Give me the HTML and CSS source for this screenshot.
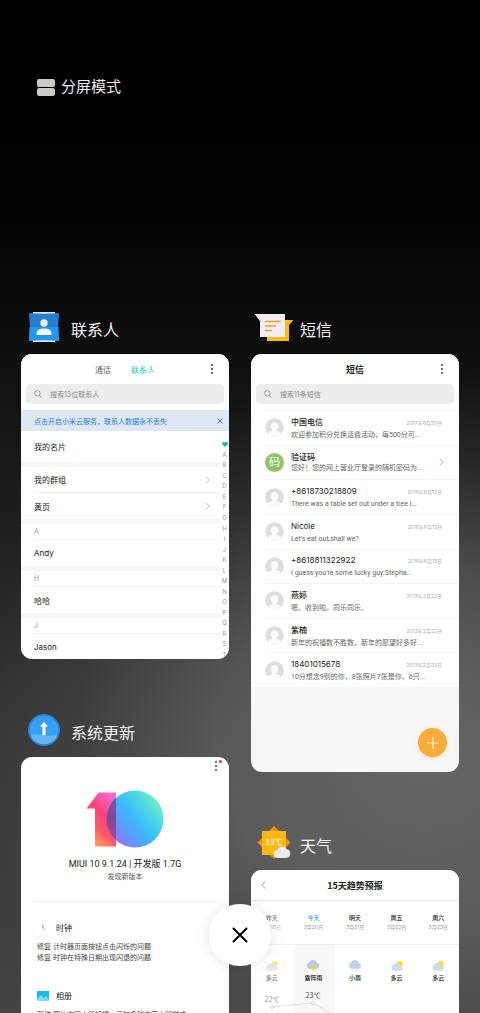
FILE: index.html
```html
<!DOCTYPE html>
<html lang="zh-CN">
<head>
<meta charset="utf-8">
<meta name="viewport" content="width=device-width, initial-scale=1">
<title>最近任务</title>
<link rel="stylesheet" href="styles.css">
</head>
<body>
<main class="recents">
  <button class="split" type="button">
    <span class="split-icon"><i></i><i></i></span>
    <span>分屏模式</span>
  </button>

  <div class="columns">
    <div class="column">
      <section class="task">
        <header class="task-head">
          <svg class="task-icon" viewBox="0 0 32 32" width="32" height="32" aria-hidden="true">
            <path d="M5 1h22v30H5z" fill="#e4e8e8"/>
            <path d="M1 2q15 1.600 30 0L30 17H2z" fill="#267fcc"/>
            <path d="M1.500 16h29l.5 14q-15-1.600-30 0z" fill="#1e97f5"/>
            <circle cx="16" cy="12" r="3.700" fill="#e8edf2"/>
            <path d="M8.500 24v-1.500c0-3.500 3-5 7.500-5s7.500 1.500 7.500 5V24z" fill="#f4f7fa"/>
          </svg>
          <h2>联系人</h2>
        </header>
        <article class="card contacts">
          <nav class="app-bar">
            <a class="tab" href="#calls">通话</a>
            <a class="tab active" href="#contacts">联系人</a>
            <button class="more" type="button" aria-label="更多"><i></i><i></i><i></i></button>
          </nav>
          <label class="search">
            <svg viewBox="0 0 10 10" width="8" height="8" aria-hidden="true"><circle cx="4.200" cy="4.200" r="3.400"/><path d="M6.800 6.800 9.500 9.500"/></svg>
            <input type="text" placeholder="搜索13位联系人" aria-label="搜索联系人">
          </label>
          <div class="banner">
            <a href="#cloud">点击开启小米云服务，联系人数据永不丢失</a>
            <button type="button" aria-label="关闭提示"><svg viewBox="0 0 6 6" width="6" height="6"><path d="M.5.5l5 5m0-5l-5 5"/></svg></button>
          </div>
          <div class="contact-body">
            <div class="contact-list">
              <a class="row tall" href="#me">我的名片</a>
              <div class="band"></div>
              <a class="row line" href="#groups">我的群组<svg class="chev" viewBox="0 0 5 8" width="5" height="8"><path d="M.7.7 4.200 4 .7 7.300"/></svg></a>
              <a class="row" href="#yellow">黄页<svg class="chev" viewBox="0 0 5 8" width="5" height="8"><path d="M.7.7 4.200 4 .7 7.300"/></svg></a>
              <div class="band"></div>
              <h3 class="letter">A</h3>
              <a class="row" href="#andy">Andy</a>
              <div class="band"></div>
              <h3 class="letter">H</h3>
              <a class="row" href="#haha">哈哈</a>
              <div class="band"></div>
              <h3 class="letter">J</h3>
              <a class="row" href="#jason">Jason</a>
            </div>
            <div class="index">
              <span><svg viewBox="0 0 6 5" width="6" height="5"><path d="M3 5 .4 2.600C-.5 1.200.5 0 1.600 0 2.300 0 2.800.4 3 .8 3.200.4 3.700 0 4.400 0 5.500 0 6.500 1.200 5.600 2.600z" fill="#15b8ac"/></svg></span>
              <span>A</span><span>B</span><span>C</span><span>D</span><span>E</span><span>F</span><span>G</span><span>H</span><span>I</span><span>J</span><span>K</span><span>L</span><span>M</span><span>N</span><span>O</span><span>P</span><span>Q</span><span>R</span><span>S</span><span>T</span>
            </div>
          </div>
        </article>
      </section>

      <section class="task">
        <header class="task-head">
          <svg class="task-icon" viewBox="0 0 32 32" width="32" height="32" aria-hidden="true">
            <circle cx="16" cy="16" r="16" fill="#2784d8"/>
            <circle cx="16" cy="16" r="14.300" fill="#379ff2"/>
            <path d="M2.600 21q6.700-1.400 13.400 0t13.400 0A14.300 14.300 0 0 1 2.600 21z" fill="#64b5f5"/>
            <path d="M16 8l4 4.500h-2.500V21h-3v-8.500H12z" fill="#fff"/>
          </svg>
          <h2>系统更新</h2>
        </header>
        <article class="card update">
          <div class="update-top">
            <button class="more dot" type="button" aria-label="更多"><i></i><i></i><i></i></button>
          </div>
          <svg class="logo" viewBox="0 0 78 58" width="78" height="58" role="img" aria-label="10">
            <defs>
              <linearGradient id="one" x1="0.300" y1="1" x2="0.800" y2="0">
                <stop offset="0" stop-color="#ffa657"/><stop offset=".3" stop-color="#ff5a68"/><stop offset=".6" stop-color="#ff3f7a"/><stop offset="1" stop-color="#f66fd6"/>
              </linearGradient>
              <linearGradient id="zero" x1="0.100" y1="0.850" x2="0.900" y2="0.200">
                <stop offset="0" stop-color="#a06cf8"/><stop offset=".2" stop-color="#6b90fb"/><stop offset=".5" stop-color="#3cb9fb"/><stop offset=".75" stop-color="#4bd2e8"/><stop offset="1" stop-color="#6cf0c4"/>
              </linearGradient>
              <linearGradient id="over" x1="0" y1="0" x2="0" y2="1">
                <stop offset="0" stop-color="#6a5cc4"/><stop offset=".5" stop-color="#84488f"/><stop offset="1" stop-color="#a04db0"/>
              </linearGradient>
              <clipPath id="disc"><circle cx="49" cy="29" r="28.500"/></clipPath>
            </defs>
            <path d="M12.500 2.500H30V56.500H9V18.500H.5z" fill="url(#one)"/>
            <circle cx="49" cy="29" r="28.500" fill="url(#zero)"/>
            <path d="M20 2.500h10v54H20z" fill="url(#over)" clip-path="url(#disc)"/>
          </svg>
          <p class="version">MIUI 10 9.1.24 | 开发版 1.7G</p>
          <p class="found">发现新版本</p>
          <div class="change first">
            <h3><svg viewBox="0 0 12 12" width="12" height="12" aria-hidden="true"><path d="M5.500 2.500 6.300 6" stroke="#8d939c" fill="none"/><path d="M6.300 6l2.200 3" stroke="#f4a0a8" fill="none"/></svg>时钟</h3>
            <p>修复 计时器页面按钮点击闪烁的问题</p>
            <p>修复 时钟在特殊日期出现闪退的问题</p>
          </div>
          <div class="change">
            <h3><svg viewBox="0 0 12 12" width="12" height="12" aria-hidden="true"><path d="M0 1h12v10H0z" fill="#13bdf0"/><path d="M0 9l4-4 3 3 2-2 3 3v2H0z" fill="#7fdcf6"/></svg>相册</h3>
            <p>新增 照片文字水印编辑，添加多种文艺水印样式</p>
          </div>
        </article>
      </section>
    </div>

    <div class="column">
      <section class="task">
        <header class="task-head wide">
          <svg class="task-icon" viewBox="0 0 40 32" width="40" height="32" aria-hidden="true">
            <path d="M13 9h26.500L35 14v16H13z" fill="#fdbe0f"/>
            <path d="M.5 3H31v23H6V10z" fill="#f0eef2"/>
            <path d="M11 10.500h15.500M11 15h11M11 19.500h7" stroke="#f79a2d" stroke-width="1.500"/>
          </svg>
          <h2>短信</h2>
        </header>
        <article class="card sms">
          <header class="app-bar">
            <h3 class="title">短信</h3>
            <button class="more" type="button" aria-label="更多"><i></i><i></i><i></i></button>
          </header>
          <div class="search-area">
            <label class="search">
              <svg viewBox="0 0 10 10" width="8" height="8" aria-hidden="true"><circle cx="4.200" cy="4.200" r="3.400"/><path d="M6.800 6.800 9.500 9.500"/></svg>
              <input type="text" placeholder="搜索11条短信" aria-label="搜索短信">
            </label>
          </div>
          <svg class="defs" width="0" height="0" aria-hidden="true"><defs>
            <clipPath id="round"><circle cx="10" cy="10" r="10"/></clipPath>
            <symbol id="person" viewBox="0 0 20 20"><circle cx="10" cy="10" r="10" fill="#dcdee1"/><path clip-path="url(#round)" d="M10 4.200c2.600 0 4 1.900 4 4.300 0 1.700-.6 3.100-1.600 4v1.300c1.500.8 4 1 5 3V21H2.600v-4.200c1-2 3.500-2.200 5-3v-1.300c-1-.9-1.600-2.300-1.600-4 0-2.400 1.400-4.300 4-4.300z" fill="#fafafb"/></symbol>
          </defs></svg>
          <ul class="messages">
            <li><svg class="avatar"><use href="#person"/></svg><div class="msg"><h4>中国电信</h4><time>2017年6月30日</time><p>欢迎参加积分兑换话费活动，每500分可...</p></div></li>
            <li><span class="avatar code">码</span><div class="msg"><h4>验证码</h4><p>您好！您的网上营业厅登录的随机密码为...</p></div><svg class="chev" viewBox="0 0 5 8" width="5" height="8"><path d="M.7.7 4.200 4 .7 7.300"/></svg></li>
            <li><svg class="avatar"><use href="#person"/></svg><div class="msg"><h4 class="latin">+8618730218809</h4><time>2016年6月13日</time><p>There was a table set out under a tree i...</p></div></li>
            <li><svg class="avatar"><use href="#person"/></svg><div class="msg"><h4 class="latin">Nicole</h4><time>2016年6月13日</time><p>Let's eat out,shall we?</p></div></li>
            <li><svg class="avatar"><use href="#person"/></svg><div class="msg"><h4 class="latin">+8618811322922</h4><time>2016年6月13日</time><p>I guess you're some lucky guy.Stepha...</p></div></li>
            <li><svg class="avatar"><use href="#person"/></svg><div class="msg"><h4>燕婷</h4><time>2013年2月22日</time><p>嗯。收到啦。同乐同乐。</p></div></li>
            <li><svg class="avatar"><use href="#person"/></svg><div class="msg"><h4>紫楠</h4><time>2013年2月22日</time><p>新年的祝福数不胜数，新年的愿望好多好...</p></div></li>
            <li><svg class="avatar"><use href="#person"/></svg><div class="msg"><h4 class="latin">18401015678</h4><time>2013年2月22日</time><p>10分想念9别的你，8张照片7张是你，6只...</p></div></li>
          </ul>
          <button class="compose" type="button" aria-label="新建短信"><svg viewBox="0 0 12 12" width="12" height="12"><path d="M6 0v12M0 6h12" stroke="#fff4e0" stroke-width="1.200"/></svg></button>
        </article>
      </section>

      <section class="task">
        <header class="task-head wide">
          <svg class="task-icon" viewBox="0 0 40 34" width="40" height="34" aria-hidden="true">
            <path d="M20 0l16.500 16.500L20 33 3.500 16.500z" fill="#f78d12"/>
            <path d="M8 5h24v24H8z" fill="#fdb913"/>
            <text x="20" y="19" text-anchor="middle" class="icon-temp">19℃</text>
            <path d="M24 32a4 4 0 0 1-.5-8 5 5 0 0 1 9.300-.7A4.400 4.400 0 0 1 32 32z" fill="#e9ebed"/>
          </svg>
          <h2>天气</h2>
        </header>
        <article class="card weather">
          <header class="app-bar ruled">
            <button class="back" type="button" aria-label="返回"><svg viewBox="0 0 5 8" width="5" height="8"><path d="M4.300.5.8 4l3.500 3.500"/></svg></button>
            <h3 class="title">15天趋势预报</h3>
          </header>
          <svg class="defs" width="0" height="0" aria-hidden="true"><defs>
            <symbol id="cloudy" viewBox="0 0 14 12"><circle cx="9.800" cy="4" r="3" fill="#ffe01c"/><path d="M4.200 10.800a3.200 3.200 0 0 1-.4-6.300 3.800 3.800 0 0 1 6.400.9 2.800 2.800 0 0 1 .7 5.400z" fill="#ccd9ee"/></symbol>
            <symbol id="rain" viewBox="1.500 .8 11 10.500"><path d="M4 8.500a2.800 2.800 0 0 1-.3-5.500 3.600 3.600 0 0 1 6.700.3A2.700 2.700 0 0 1 10.200 8.500z" fill="#c3d1ea"/><path d="M5.800 9l-.7 1.800M8.800 9l-.7 1.800" stroke="#c3d1ea" stroke-width=".8"/></symbol>
            <symbol id="storm" viewBox="1.500 .8 11 10.500"><path d="M4 8.500a2.800 2.800 0 0 1-.3-5.500 3.600 3.600 0 0 1 6.700.3A2.700 2.700 0 0 1 10.200 8.500z" fill="#b9c9e6"/><path d="M8 4.500 4.600 8.600h2L6 11.300l3.600-4.300H7.700z" fill="#ffd800"/></symbol>
          </defs></svg>
          <div class="days">
            <div class="day past"><b>昨天</b><small>3月19日</small></div>
            <div class="day today"><b>今天</b><small>3月20日</small></div>
            <div class="day"><b>明天</b><small>3月21日</small></div>
            <div class="day"><b>周五</b><small>3月22日</small></div>
            <div class="day"><b>周六</b><small>3月23日</small></div>
          </div>
          <div class="forecast">
            <div class="sky past"><svg><use href="#cloudy"/></svg><b>多云</b></div>
            <div class="sky today"><svg><use href="#storm"/></svg><b>雷阵雨</b></div>
            <div class="sky"><svg><use href="#rain"/></svg><b>小雨</b></div>
            <div class="sky"><svg><use href="#cloudy"/></svg><b>多云</b></div>
            <div class="sky"><svg><use href="#cloudy"/></svg><b>多云</b></div>
            <svg class="chart" viewBox="0 0 208 60" aria-hidden="true">
              <path d="M21 22 62 18 103 42 145 36 187 34" fill="none" stroke="#d4d4d4" stroke-width=".7"/>
              <g fill="#fff" stroke="#c8c8c8" stroke-width=".7"><circle cx="21" cy="22" r="1.500"/><circle cx="62" cy="18" r="1.500"/><circle cx="103" cy="42" r="1.500"/></g>
              <text x="21" y="17" class="t old">22℃</text><text x="62" y="13" class="t">23℃</text><text x="103" y="34" class="t">18℃</text>
            </svg>
          </div>
        </article>
      </section>
    </div>
  </div>

  <button class="close-all" type="button" aria-label="全部清理"><svg viewBox="0 0 16 16" width="16" height="16"><path d="M1.500 1.500l13 13m0-13l-13 13"/></svg></button>
</main>
</body>
</html>
```
FILE: styles.css
```css
* { box-sizing: border-box; margin: 0; padding: 0; }

body {
  font-family: Inter, "Noto Sans CJK SC", sans-serif;
  background: #000;
  color: #222;
}

button { border: 0; background: none; font: inherit; color: inherit; cursor: pointer; }
a { color: inherit; text-decoration: none; }
h2, h3, h4 { font-weight: 400; }
ul { list-style: none; }
i { display: block; }
.defs { position: absolute; }

.recents {
  position: relative;
  height: 100vh;
  overflow: hidden;
  padding: 76px 21px 0;
  background:
    radial-gradient(ellipse 460px 370px at 88% 73%, rgba(150, 150, 150, .5), rgba(145, 145, 145, .38) 45%, rgba(130, 130, 130, .14) 75%, transparent),
    linear-gradient(#000 0, #020202 20%, #0b0b0b 31%, #171717 43%, #222 55%, #2f2f2f 66%, #363636 75%, #444 100%);
}

.split {
  display: flex;
  align-items: center;
  gap: 6px;
  height: 22px;
  margin-left: 16px;
  color: #eee;
  font-size: 15px;
  line-height: 22px;
}
.split-icon { display: grid; gap: 1px; width: 18px; }
.split-icon i { height: 8px; border-radius: 2px; background: #cacaca; }

.columns {
  display: grid;
  grid-template-columns: 1fr 1fr;
  gap: 22px;
  margin-top: 208px;
}
.column { display: grid; gap: 50px; align-content: start; min-width: 0; }

.task-head {
  display: flex;
  align-items: center;
  gap: 11px;
  height: 48px;
  padding: 0 0 6px 7px;
}
.task-head.wide { gap: 6px; padding-left: 3px; }
.task-head h2 { padding-top: 6px; color: #f2f2f2; font-size: 16px; line-height: 24px; }
.icon-temp { fill: #fff; font-family: "Noto Sans CJK SC", sans-serif; font-size: 8px; }

.card {
  position: relative;
  overflow: hidden;
  border-radius: 11px;
  background: #fff;
}
.contacts { height: 305px; }
.sms { height: 418px; background: #f6f6f6; }
.update, .weather { height: 420px; }

.app-bar {
  display: flex;
  position: relative;
  justify-content: center;
  align-items: center;
  gap: 20px;
  height: 30px;
  background: #fff;
  font-size: 8px;
}
.app-bar.ruled { height: 31px; border-bottom: 1px solid #ececec; }
.tab { color: #666; }
.tab.active { color: #1cc8c0; }
.title { font-family: "Noto Sans CJK SC", sans-serif; font-size: 9px; font-weight: 700; color: #222; }
.more {
  position: absolute;
  right: 14px;
  top: 9px;
  display: grid;
  gap: 2px;
  padding: 1px 2px;
}
.more i { width: 2px; height: 2px; border-radius: 1px; background: #444; }
.back { position: absolute; left: 10px; top: 11px; display: flex; }
.back svg { fill: none; stroke: #999; }

.search-area { background: #fff; }
.search {
  display: flex;
  align-items: center;
  gap: 8px;
  height: 20px;
  margin: 0 5px;
  padding: 0 8px;
  border-radius: 4px;
  background: #ededed;
}
.search svg { flex: none; fill: none; stroke: #888; }
.search input {
  flex: 1;
  min-width: 0;
  border: 0;
  outline: 0;
  background: none;
  font: inherit;
  font-size: 7px;
}
.search input::placeholder { color: #8c8c8c; opacity: 1; }

.banner {
  display: flex;
  justify-content: space-between;
  align-items: center;
  height: 21px;
  margin-top: 6px;
  padding: 0 6px 0 13px;
  background: #dfe7f4;
  color: #1f7cf0;
  font-size: 7px;
  white-space: nowrap;
}
.banner button { display: flex; }
.banner svg { stroke: #1f7cf0; }

.contact-body { display: flex; }
.contact-list { flex: 1; min-width: 0; }
.row {
  display: flex;
  justify-content: space-between;
  align-items: center;
  height: 26px;
  margin-left: 13px;
  padding-right: 10px;
  font-size: 8px;
}
.row.tall { height: 31px; }
.row.line { border-bottom: 1px solid #efefef; }
.chev { flex: none; fill: none; stroke: #aaa; stroke-width: .8; }
.band { height: 5px; background: #f6f6f6; }
.letter {
  height: 16px;
  margin-left: 13px;
  border-bottom: 1px solid #f1f1f1;
  color: #999;
  font-size: 7px;
  line-height: 16px;
}
.index {
  display: flex;
  flex-direction: column;
  width: 9px;
  height: 221px;
  margin-top: 8px;
  color: #999;
  font-size: 6px;
  line-height: 8px;
}
.index span { flex: 1; display: flex; justify-content: center; align-items: center; }

.messages {
  display: grid;
  grid-auto-rows: 1fr;
  height: 283px;
  padding-top: 6px;
  background: #fff;
}
.messages li {
  display: flex;
  align-items: center;
  gap: 7px;
  margin-left: 14px;
  padding-right: 17px;
  border-top: 1px solid #f5f5f5;
}
.messages .chev { margin-right: -2px; }
.avatar { flex: none; width: 19px; height: 19px; border-radius: 50%; }
.avatar.code { background: #8fc46b; color: #fff; font-size: 11px; line-height: 19px; text-align: center; }
.msg {
  display: grid;
  grid-template-columns: 1fr auto;
  flex: 1;
  min-width: 0;
  white-space: nowrap;
}
.msg h4 { font-size: 8px; font-weight: 500; line-height: 12px; }
.msg h4.latin { font-weight: 400; }
.msg time { color: #b0b0b0; font-size: 5px; line-height: 14px; }
.msg p { grid-column: 1 / -1; color: #666; font-family: Roboto, "Noto Sans CJK SC", sans-serif; font-size: 7px; line-height: 10px; }
.compose {
  position: absolute;
  right: 12px;
  bottom: 15px;
  display: flex;
  justify-content: center;
  align-items: center;
  width: 29px;
  height: 29px;
  border-radius: 50%;
  background: #f7ac3c;
  box-shadow: 0 1px 4px rgba(247, 172, 60, .3);
}

.update { text-align: center; }
.update-top { height: 33px; }
.update .more { right: 10px; top: 3px; }
.more.dot::after {
  content: "";
  position: absolute;
  right: -3px;
  top: 0;
  width: 3px;
  height: 3px;
  border-radius: 50%;
  background: #f33;
}
.logo { display: block; margin: 0 auto; }
.version { margin-top: 9px; font-family: Roboto, "Noto Sans CJK SC", sans-serif; font-size: 9px; line-height: 14px; }
.found { color: #555; font-size: 7px; line-height: 11px; }
.change { margin: 25px 12px 0; padding: 0 4px; color: #444; font-size: 7px; line-height: 11px; text-align: left; white-space: nowrap; }
.change.first { margin-top: 19px; padding-top: 18px; border-top: 1px solid #efefef; }
.change h3 { display: flex; align-items: center; gap: 7px; height: 16px; margin-bottom: 5px; color: #222; font-size: 8px; }

.days, .forecast { display: grid; grid-template-columns: repeat(5, 1fr); text-align: center; }
.days { height: 44px; padding-top: 12px; border-bottom: 1px solid #f1f1f1; }
.day b, .sky b { display: block; font-size: 6px; line-height: 10px; font-weight: 500; color: #222; }
.day small { display: block; color: #999; font-size: 5px; line-height: 8px; }
.day.today b { color: #1a9ff0; }
.past { opacity: .6; }
.sky { height: 300px; padding-top: 15px; }
.sky svg { display: block; width: 14px; height: 12px; margin: 0 auto 1px; }
.sky.today { background: #f8f8f8; }
.forecast { position: relative; }
.chart { position: absolute; left: 0; top: 40px; width: 100%; }
.t { fill: #444; font-family: "Noto Sans CJK SC", sans-serif; font-size: 7px; text-anchor: middle; }
.t.old { fill: #999; }

.close-all {
  position: absolute;
  left: 50%;
  bottom: 47px;
  display: flex;
  justify-content: center;
  align-items: center;
  width: 62px;
  height: 62px;
  margin-left: -31px;
  border-radius: 50%;
  background: #fff;
  box-shadow: 0 1px 16px rgba(0, 0, 0, .1);
}
.close-all svg { stroke: #000; stroke-width: 2; stroke-linecap: round; }
```
